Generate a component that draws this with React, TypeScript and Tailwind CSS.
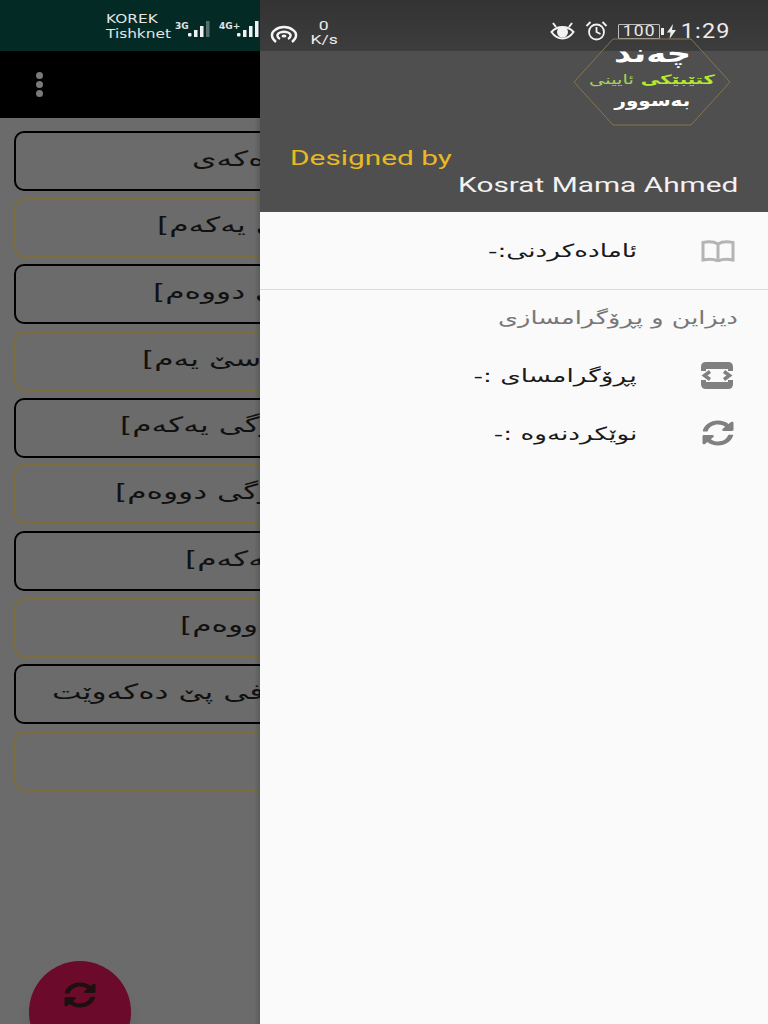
import { FaSyncAlt } from "react-icons/fa";

const ARABIC = "font-['DejaVu_Sans',sans-serif]";
const LATIN = "font-['Roboto',sans-serif]";

const CARDS = [
  { text: "ەکەی", left: 176, gold: false },
  { text: "بەشی یەکەم]", left: 141, gold: true },
  { text: "بەشی دووەم]", left: 137, gold: false },
  { text: "بەشی سێ یەم]", left: 126, gold: true },
  { text: "بەرگی یەکەم]", left: 104, gold: false },
  { text: "بەرگی دووەم]", left: 99, gold: true },
  { text: "بەشی یەکەم]", left: 169, gold: false },
  { text: "بەشی دووەم]", left: 164, gold: true },
  { text: "مافی پێ دەکەوێت", left: 36, gold: false },
  { text: "", left: 0, gold: true },
];

function SignalBars({ dim }: { dim?: boolean }) {
  return (
    <svg width="24" height="16" viewBox="0 0 24 16" fill="#f2f2f2">
      <rect x="0" y="12" width="3.5" height="3.5" rx="1" />
      <rect x="6" y="9" width="3.5" height="7" />
      <rect x="12" y="5" width="3.5" height="11" />
      <rect x="18" y="0" width="3.5" height="16" opacity={dim ? 0.35 : 1} />
    </svg>
  );
}

function BookIcon() {
  return (
    <svg width="34" height="22" viewBox="0 0 34 22" fill="none" stroke="#b4b4b4" strokeWidth="3">
      <path d="M17 4C13 1.5 7 1.5 2 2.5V20C7 19 13 19 17 21C21 19 27 19 32 20V2.5C27 1.5 21 1.5 17 4Z" />
      <path d="M17 4V21" />
    </svg>
  );
}

function ProgrammerIcon() {
  return (
    <svg width="32" height="27" viewBox="0 0 32 27" fill="#808080">
      <path d="M5 0H27Q32 0 32 5V9H27V7H5V9H0V5Q0 0 5 0Z" />
      <path d="M5 27H27Q32 27 32 22V18H27V20H5V18H0V22Q0 27 5 27Z" />
      <path d="M9 9.5L3.5 13.5L9 17.5M23 9.5L28.5 13.5L23 17.5" fill="none" stroke="#808080" strokeWidth="3.5" />
    </svg>
  );
}

function StatusBar() {
  return (
    <div className="flex h-[51px] items-center justify-end bg-gradient-to-b from-[#333333] to-[#3d3d3d] pt-[11px] pr-[37px] text-[#ececec]">
      <svg width="25" height="18" viewBox="0 0 25 18" fill="none" stroke="#f2f2f2" strokeWidth="2">
        <path d="M1.5 10C5 6 9 5 12.5 5C16 5 20 6 23.5 10C20 15 16 16.5 12.5 16.5C9 16.5 5 15 1.5 10Z" />
        <circle cx="12.5" cy="10" r="4.5" fill="#f2f2f2" />
        <path d="M3 1L6 5M22 1L19 5" />
      </svg>
      <svg className="ml-[10px]" width="23" height="20" viewBox="0 0 23 20" fill="none" stroke="#f2f2f2" strokeWidth="1.8">
        <circle cx="11.5" cy="11" r="7.5" />
        <path d="M11.5 6V11L15.5 13" />
        <path d="M1.5 5L5.5 1M21.5 5L17.5 1" />
      </svg>
      <div className="ml-[10px] flex items-center gap-[1px]">
        <span className={`flex h-[15px] w-[42px] items-center justify-center rounded-[1px] border border-[#bdbdbd] ${LATIN} text-[14px] tracking-[1px]`}>
          <span className="inline-block scale-x-[1.25]">100</span>
        </span>
        <span className="h-[7px] w-[3px] bg-[#ececec]" />
      </div>
      <svg className="ml-[3px]" width="9" height="15" viewBox="0 0 9 15" fill="#ececec">
        <path d="M6 0L0 8.5H3.5L2.5 15L9 6H5Z" />
      </svg>
      <div className="ml-[7px] flex w-[48px] justify-end">
        <span className={`inline-block origin-right scale-x-[1.17] ${LATIN} text-[20px] tracking-[1px]`}>1:29</span>
      </div>
    </div>
  );
}

function Drawer() {
  return (
    <aside className="absolute top-0 right-0 bottom-0 flex w-[508px] flex-col bg-[#fafafa]">
      <header className="relative h-[212px] shrink-0 bg-[#4f4f4f]">
        <StatusBar />
        <div className={`absolute top-[38px] left-[313px] flex h-[88px] w-[158px] flex-col items-center pt-[1px] ${ARABIC}`} dir="rtl">
          <svg className="absolute inset-0" width="158" height="88" viewBox="0 0 158 88" fill="none" stroke="#85764f" strokeWidth="1">
            <path d="M40 1H118L157 44L118 87H40L1 44Z" />
          </svg>
          <span className="relative inline-block scale-x-[1.35] text-[25px] leading-[30px] font-bold text-white">چەند</span>
          <span className="relative mt-[1px] inline-block scale-x-[1.5] text-[13px] leading-[20px] font-bold text-[#b7ea2e]">
            کتێبێکی <span className="font-normal text-[#a6cf5c]">ئایینی</span>
          </span>
          <span className="relative inline-block scale-x-[1.25] text-[16px] leading-[22px] font-bold text-white">بەسوور</span>
        </div>
        <p className={`absolute top-[146px] left-[30px] inline-block origin-left scale-x-[1.42] ${LATIN} text-[21px] leading-[24px] text-[#e8b923]`}>
          Designed by
        </p>
        <p className={`absolute top-[172px] right-[30px] inline-block origin-right scale-x-[1.42] ${LATIN} text-[21px] leading-[26px] text-[#f2f2f2]`}>
          Kosrat Mama Ahmed
        </p>
      </header>
      <div className={`flex h-[78px] shrink-0 items-center justify-end border-b border-[#dcdcdc] pr-[33px] ${ARABIC}`}>
        <span className="mr-[64px] inline-block origin-right scale-x-[1.46] text-[18px] text-[#1a1a1a]" dir="rtl">ئامادەکردنی:-</span>
        <BookIcon />
      </div>
      <div className={`mt-[13px] flex justify-end pr-[30px] ${ARABIC}`}>
        <p className="origin-right scale-x-[1.42] text-[18px] leading-[30px] text-[#777777]" dir="rtl">
          دیزاین و پڕۆگرامسازی
        </p>
      </div>
      <div className={`mt-[13px] flex h-[58px] items-center justify-end pr-[35px] ${ARABIC}`}>
        <span className="mr-[64px] inline-block origin-right scale-x-[1.46] text-[18px] text-[#1a1a1a]" dir="rtl">پڕۆگرامسای :-</span>
        <ProgrammerIcon />
      </div>
      <div className={`flex h-[58px] items-center justify-end pr-[34px] ${ARABIC}`}>
        <span className="mr-[65px] inline-block origin-right scale-x-[1.46] text-[18px] text-[#1a1a1a]" dir="rtl">نوێکردنەوە :-</span>
        <FaSyncAlt className="h-[26px] w-[32px] text-[#808080]" preserveAspectRatio="none" />
      </div>
    </aside>
  );
}

export default function App() {
  return (
    <div className="relative h-[1024px] w-[768px] overflow-hidden bg-[#6b6b6b]">
      <div className="flex h-[51px] items-center bg-[#032a25] pl-[106px] text-[#e4e4e4]">
        <div className="w-[55px] font-['DejaVu_Sans',sans-serif] text-[13px] leading-[15px]">
          <p className="origin-left scale-x-[1.18] whitespace-nowrap">KOREK</p>
          <p className="origin-left scale-x-[1.18] whitespace-nowrap">Tishknet</p>
        </div>
        <div className={`ml-[14px] flex items-start pt-[7px] ${ARABIC} font-bold`}>
          <span className="w-[13px] text-[9px] leading-[10px]">3G</span>
          <SignalBars dim />
          <span className="ml-[7px] w-[18px] text-[9px] leading-[10px]">4G+</span>
          <SignalBars />
        </div>
      </div>
      <div className="flex h-[67px] items-center bg-black pl-[36px]">
        <div className="flex flex-col gap-[2px]">
          <span className="size-[7px] rounded-full bg-[#7a7a7a]" />
          <span className="size-[7px] rounded-full bg-[#7a7a7a]" />
          <span className="size-[7px] rounded-full bg-[#7a7a7a]" />
        </div>
      </div>
      <div className="flex w-[260px] flex-col gap-[6.67px] overflow-hidden pt-[13px] pl-[14px]">
        {CARDS.map((card, i) => (
          <div
            key={i}
            className={`flex h-[60px] w-[740px] shrink-0 items-center rounded-[10px] border-2 pb-[3px] ${ARABIC} text-[21px] text-[#111111] ${card.gold ? "border-[#7d6c3c]" : "border-black"}`}
            style={{ paddingLeft: card.left }}
          >
            <span className="inline-block origin-left scale-x-[1.49] whitespace-nowrap" dir="rtl">{card.text}</span>
          </div>
        ))}
      </div>
      <div className="absolute top-[961px] left-[29px] flex h-[102px] w-[102px] items-center justify-center rounded-full bg-[#6b0a2b] pb-[34px] shadow-lg">
        <FaSyncAlt className="h-[26px] w-[32px] text-[#1c1010]" preserveAspectRatio="none" />
      </div>
      <div className="absolute top-[118px] left-[254px] h-[906px] w-[6px] bg-gradient-to-r from-transparent to-black/15" />
      <Drawer />
      <div className="absolute top-[18px] left-[270px] flex items-center gap-[13px] text-[#ececec]">
        <svg className="mt-[4px]" width="28" height="19" viewBox="0 0 28 19" fill="none" stroke="#f5f5f5" strokeWidth="2.4">
          <path d="M6 17C1 13 0.5 8 5 5C10 1 18 1 23 5C27.5 8 27 13 22 17" />
          <path d="M10 14C6.5 12 6.5 9 10 7.5C12.5 6.5 15.5 6.5 18 7.5C21.5 9 21.5 12 18 14" />
          <ellipse cx="14" cy="11" rx="2.5" ry="1.6" fill="#f5f5f5" stroke="none" />
        </svg>
        <div className={`mt-[1px] flex w-[26px] flex-col items-center ${LATIN} text-[13px] leading-[14px]`}>
          <span className="inline-block scale-x-[1.35]">0</span>
          <span className="inline-block scale-x-[1.35]">K/s</span>
        </div>
      </div>
    </div>
  );
}
